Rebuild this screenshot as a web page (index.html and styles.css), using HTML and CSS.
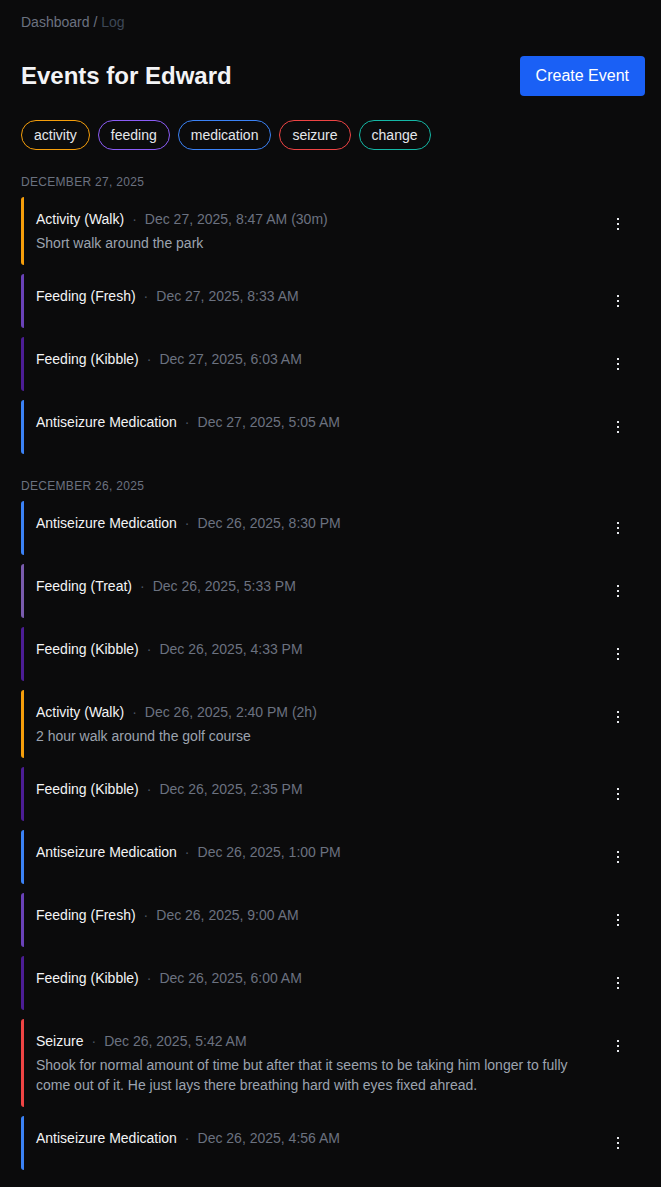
FILE: index.html
```html
<!DOCTYPE html>
<html lang="en">
<head>
<meta charset="utf-8">
<title>Events for Edward</title>
<link rel="stylesheet" href="styles.css">
</head>
<body>
<div class="page">
  <nav class="crumbs"><span class="crumb">Dashboard</span> <span class="sep">/</span> <span class="crumb-current">Log</span></nav>

  <header class="head">
    <h1 class="title">Events for Edward</h1>
    <button class="btn-primary">Create Event</button>
  </header>

  <div class="pills">
    <span class="pill pill-activity">activity</span>
    <span class="pill pill-feeding">feeding</span>
    <span class="pill pill-medication">medication</span>
    <span class="pill pill-seizure">seizure</span>
    <span class="pill pill-change">change</span>
  </div>

  <section class="day">
    <h2 class="day-title">December 27, 2025</h2>
    <ul class="events">
      <li class="event bar-activity">
        <div class="event-body">
          <div class="event-line"><span class="event-name">Activity (Walk)</span><span class="dot">·</span><span class="event-time">Dec 27, 2025, 8:47 AM (30m)</span></div>
          <p class="event-note">Short walk around the park</p>
        </div>
        <button class="kebab" aria-label="More"><svg width="4" height="14" viewBox="0 0 4 14"><rect x="1" y="1" width="2" height="2"/><rect x="1" y="6" width="2" height="2"/><rect x="1" y="11" width="2" height="2"/></svg></button>
      </li>
      <li class="event bar-fresh">
        <div class="event-body">
          <div class="event-line"><span class="event-name">Feeding (Fresh)</span><span class="dot">·</span><span class="event-time">Dec 27, 2025, 8:33 AM</span></div>
        </div>
        <button class="kebab" aria-label="More"><svg width="4" height="14" viewBox="0 0 4 14"><rect x="1" y="1" width="2" height="2"/><rect x="1" y="6" width="2" height="2"/><rect x="1" y="11" width="2" height="2"/></svg></button>
      </li>
      <li class="event bar-kibble">
        <div class="event-body">
          <div class="event-line"><span class="event-name">Feeding (Kibble)</span><span class="dot">·</span><span class="event-time">Dec 27, 2025, 6:03 AM</span></div>
        </div>
        <button class="kebab" aria-label="More"><svg width="4" height="14" viewBox="0 0 4 14"><rect x="1" y="1" width="2" height="2"/><rect x="1" y="6" width="2" height="2"/><rect x="1" y="11" width="2" height="2"/></svg></button>
      </li>
      <li class="event bar-medication">
        <div class="event-body">
          <div class="event-line"><span class="event-name">Antiseizure Medication</span><span class="dot">·</span><span class="event-time">Dec 27, 2025, 5:05 AM</span></div>
        </div>
        <button class="kebab" aria-label="More"><svg width="4" height="14" viewBox="0 0 4 14"><rect x="1" y="1" width="2" height="2"/><rect x="1" y="6" width="2" height="2"/><rect x="1" y="11" width="2" height="2"/></svg></button>
      </li>
    </ul>
  </section>

  <section class="day">
    <h2 class="day-title">December 26, 2025</h2>
    <ul class="events">
      <li class="event bar-medication">
        <div class="event-body">
          <div class="event-line"><span class="event-name">Antiseizure Medication</span><span class="dot">·</span><span class="event-time">Dec 26, 2025, 8:30 PM</span></div>
        </div>
        <button class="kebab" aria-label="More"><svg width="4" height="14" viewBox="0 0 4 14"><rect x="1" y="1" width="2" height="2"/><rect x="1" y="6" width="2" height="2"/><rect x="1" y="11" width="2" height="2"/></svg></button>
      </li>
      <li class="event bar-treat">
        <div class="event-body">
          <div class="event-line"><span class="event-name">Feeding (Treat)</span><span class="dot">·</span><span class="event-time">Dec 26, 2025, 5:33 PM</span></div>
        </div>
        <button class="kebab" aria-label="More"><svg width="4" height="14" viewBox="0 0 4 14"><rect x="1" y="1" width="2" height="2"/><rect x="1" y="6" width="2" height="2"/><rect x="1" y="11" width="2" height="2"/></svg></button>
      </li>
      <li class="event bar-kibble">
        <div class="event-body">
          <div class="event-line"><span class="event-name">Feeding (Kibble)</span><span class="dot">·</span><span class="event-time">Dec 26, 2025, 4:33 PM</span></div>
        </div>
        <button class="kebab" aria-label="More"><svg width="4" height="14" viewBox="0 0 4 14"><rect x="1" y="1" width="2" height="2"/><rect x="1" y="6" width="2" height="2"/><rect x="1" y="11" width="2" height="2"/></svg></button>
      </li>
      <li class="event bar-activity">
        <div class="event-body">
          <div class="event-line"><span class="event-name">Activity (Walk)</span><span class="dot">·</span><span class="event-time">Dec 26, 2025, 2:40 PM (2h)</span></div>
          <p class="event-note">2 hour walk around the golf course</p>
        </div>
        <button class="kebab" aria-label="More"><svg width="4" height="14" viewBox="0 0 4 14"><rect x="1" y="1" width="2" height="2"/><rect x="1" y="6" width="2" height="2"/><rect x="1" y="11" width="2" height="2"/></svg></button>
      </li>
      <li class="event bar-kibble">
        <div class="event-body">
          <div class="event-line"><span class="event-name">Feeding (Kibble)</span><span class="dot">·</span><span class="event-time">Dec 26, 2025, 2:35 PM</span></div>
        </div>
        <button class="kebab" aria-label="More"><svg width="4" height="14" viewBox="0 0 4 14"><rect x="1" y="1" width="2" height="2"/><rect x="1" y="6" width="2" height="2"/><rect x="1" y="11" width="2" height="2"/></svg></button>
      </li>
      <li class="event bar-medication">
        <div class="event-body">
          <div class="event-line"><span class="event-name">Antiseizure Medication</span><span class="dot">·</span><span class="event-time">Dec 26, 2025, 1:00 PM</span></div>
        </div>
        <button class="kebab" aria-label="More"><svg width="4" height="14" viewBox="0 0 4 14"><rect x="1" y="1" width="2" height="2"/><rect x="1" y="6" width="2" height="2"/><rect x="1" y="11" width="2" height="2"/></svg></button>
      </li>
      <li class="event bar-fresh">
        <div class="event-body">
          <div class="event-line"><span class="event-name">Feeding (Fresh)</span><span class="dot">·</span><span class="event-time">Dec 26, 2025, 9:00 AM</span></div>
        </div>
        <button class="kebab" aria-label="More"><svg width="4" height="14" viewBox="0 0 4 14"><rect x="1" y="1" width="2" height="2"/><rect x="1" y="6" width="2" height="2"/><rect x="1" y="11" width="2" height="2"/></svg></button>
      </li>
      <li class="event bar-kibble">
        <div class="event-body">
          <div class="event-line"><span class="event-name">Feeding (Kibble)</span><span class="dot">·</span><span class="event-time">Dec 26, 2025, 6:00 AM</span></div>
        </div>
        <button class="kebab" aria-label="More"><svg width="4" height="14" viewBox="0 0 4 14"><rect x="1" y="1" width="2" height="2"/><rect x="1" y="6" width="2" height="2"/><rect x="1" y="11" width="2" height="2"/></svg></button>
      </li>
      <li class="event bar-seizure">
        <div class="event-body">
          <div class="event-line"><span class="event-name">Seizure</span><span class="dot">·</span><span class="event-time">Dec 26, 2025, 5:42 AM</span></div>
          <p class="event-note">Shook for normal amount of time but after that it seems to be taking him longer to fully come out of it. He just lays there breathing hard with eyes fixed ahread.</p>
        </div>
        <button class="kebab" aria-label="More"><svg width="4" height="14" viewBox="0 0 4 14"><rect x="1" y="1" width="2" height="2"/><rect x="1" y="6" width="2" height="2"/><rect x="1" y="11" width="2" height="2"/></svg></button>
      </li>
      <li class="event bar-medication">
        <div class="event-body">
          <div class="event-line"><span class="event-name">Antiseizure Medication</span><span class="dot">·</span><span class="event-time">Dec 26, 2025, 4:56 AM</span></div>
        </div>
        <button class="kebab" aria-label="More"><svg width="4" height="14" viewBox="0 0 4 14"><rect x="1" y="1" width="2" height="2"/><rect x="1" y="6" width="2" height="2"/><rect x="1" y="11" width="2" height="2"/></svg></button>
      </li>
    </ul>
  </section>
</div>
</body>
</html>
```

FILE: styles.css
```css
* { box-sizing: border-box; }

html, body {
  margin: 0;
  padding: 0;
  background: #0b0b0c;
}

body {
  font-family: "Liberation Sans", Arial, sans-serif;
  color: #f3f4f6;
  font-size: 14px;
  line-height: 20px;
}

.page {
  padding: 12px 16px 16px 21px;
  display: flex;
  flex-direction: column;
}

.crumbs {
  font-size: 14px;
  line-height: 20px;
  color: #6b7280;
}
.crumbs .sep { color: #6b7280; }
.crumb-current { color: #3d4756; }

.head {
  margin-top: 24px;
  display: flex;
  align-items: center;
  justify-content: space-between;
  height: 40px;
}

.title {
  margin: 0;
  font-size: 24px;
  line-height: 32px;
  font-weight: 700;
  color: #f3f4f6;
}

.btn-primary {
  height: 40px;
  padding: 0 16px;
  border: 0;
  border-radius: 4px;
  background: #1a60f5;
  color: #ffffff;
  font-family: inherit;
  font-size: 16px;
  line-height: 20px;
  cursor: pointer;
}

.pills {
  margin-top: 24px;
  display: flex;
  gap: 8px;
}

.pill {
  display: inline-block;
  height: 30px;
  padding: 4px 12px;
  border: 1px solid;
  border-radius: 15px;
  font-size: 14px;
  line-height: 20px;
  color: #e5e7eb;
}
.pill-activity { border-color: #f59e0b; }
.pill-feeding { border-color: #8b5cf6; }
.pill-medication { border-color: #3b82f6; }
.pill-seizure { border-color: #ef4444; }
.pill-change { border-color: #14b8a6; }

.day { margin-top: 24px; }

.day-title {
  margin: 0 0 7px;
  font-size: 12px;
  line-height: 16px;
  font-weight: 400;
  letter-spacing: 0.3px;
  text-transform: uppercase;
  color: #6b7280;
}

.events {
  list-style: none;
  margin: 0;
  padding: 0;
  display: flex;
  flex-direction: column;
  gap: 9px;
}

.event {
  display: flex;
  align-items: flex-start;
  gap: 12px;
  padding: 12px 11px 12px 12px;
  border-left: 3px solid;
  border-radius: 3px;
}
.bar-activity { border-left-color: #f59e0b; }
.bar-fresh { border-left-color: #6a42b8; }
.bar-kibble { border-left-color: #4c1d95; }
.bar-treat { border-left-color: #7a5cae; }
.bar-medication { border-left-color: #3b82f6; }
.bar-seizure { border-left-color: #ef4444; }

.event-body {
  flex: 1;
  min-width: 0;
}

.event-line {
  display: flex;
  align-items: baseline;
  line-height: 20px;
}
.event-name { color: #f3f4f6; }
.dot {
  color: #4b5563;
  margin: 0 8px;
}
.event-time { color: #6b7280; }

.event-note {
  margin: 4px 0 0;
  color: #9ca3af;
  line-height: 20px;
}

.kebab {
  flex: none;
  width: 32px;
  height: 30px;
  padding: 0;
  border: 0;
  background: transparent;
  display: flex;
  align-items: center;
  justify-content: center;
  cursor: pointer;
}
.kebab svg { fill: #e5e7eb; }
```
